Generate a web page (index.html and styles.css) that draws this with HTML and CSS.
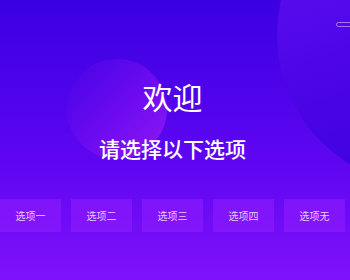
FILE: index.html
```html
<!DOCTYPE html>
<html lang="zh-CN">
<head>
    <meta charset="UTF-8">
    <meta name="viewport" content="width=device-width, initial-scale=1.0">
    <title>欢迎</title>
    <link rel="stylesheet" href="styles.css">
</head>
<body>
    <div class="page">
        <div class="bubble bubble-big"></div>
        <div class="bubble bubble-small"></div>
        <div class="menu-pill"></div>
        <div class="content">
            <h1 class="title">欢迎</h1>
            <h2 class="subtitle">请选择以下选项</h2>
            <div class="options">
                <a class="option" href="#">选项一</a>
                <a class="option" href="#">选项二</a>
                <a class="option" href="#">选项三</a>
                <a class="option" href="#">选项四</a>
                <a class="option" href="#">选项无</a>
            </div>
        </div>
    </div>
</body>
</html>
```

FILE: styles.css
```css
body, html {
    margin: 0;
    height: 100%;
    font-family: "Noto Sans CJK SC", "Noto Sans", sans-serif;
}
.page {
    position: relative;
    width: 350px;
    height: 280px;
    overflow: hidden;
    background: linear-gradient(180deg, #3a00e2 0%, #6006f2 60%, #8012fc 100%);
}
.bubble {
    position: absolute;
    border-radius: 50%;
}
.bubble-big {
    left: 277px;
    top: -116px;
    width: 302px;
    height: 302px;
    background: linear-gradient(160deg, #6412f4 0%, #4a04e6 55%, #3600de 100%);
}
.bubble-small {
    left: 67px;
    top: 59px;
    width: 100px;
    height: 100px;
    background: linear-gradient(135deg, #4602e6 0%, #6a0af0 50%, #9018f4 100%);
}
.menu-pill {
    position: absolute;
    left: 336px;
    top: 22px;
    width: 30px;
    height: 3px;
    border: 1px solid rgba(255, 255, 255, 0.45);
    border-radius: 3px;
}
.content {
    position: relative;
    display: flex;
    flex-direction: column;
    align-items: center;
    padding: 76px 5px 0 0;
}
.title {
    margin: 0;
    font-size: 30px;
    font-weight: normal;
    line-height: 40px;
    color: #fff;
}
.subtitle {
    margin: 18px 0 0;
    font-size: 21px;
    font-weight: 500;
    line-height: 28px;
    color: #fff;
}
.options {
    display: flex;
    gap: 10px;
    width: 100%;
    margin-top: 37px;
}
.option {
    flex: 0 0 61px;
    height: 33px;
    display: flex;
    align-items: center;
    justify-content: center;
    background-color: rgba(150, 30, 255, 0.5);
    color: #e4ccff;
    font-size: 10px;
    text-decoration: none;
}
```
